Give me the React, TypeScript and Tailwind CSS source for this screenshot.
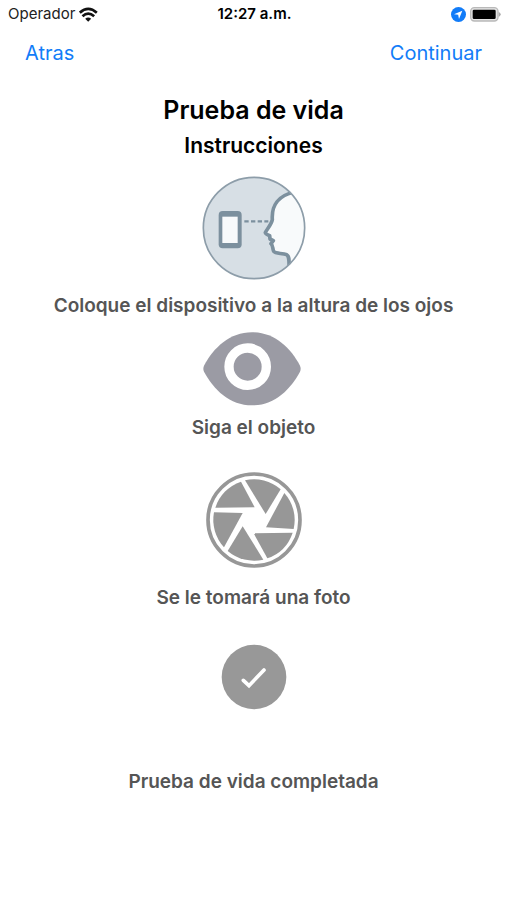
import type { ReactNode } from "react";

function WifiIcon() {
  return (
    <svg viewBox="240 15 56 45" className="h-[15px] w-[19px]" aria-hidden="true">
      <g fill="none" stroke="#111" strokeWidth="8">
        <path d="M242 32 Q267 9 293 32" />
        <path d="M250 43 Q267 27 285 43" />
      </g>
      <path d="M258 50 Q267 43 276 50 L267 59 Z" fill="#111" />
    </svg>
  );
}

function LocationIcon() {
  return (
    <svg viewBox="0 0 45 45" className="size-[15px]" aria-hidden="true">
      <circle cx="22.5" cy="22.5" r="22.5" fill="#127cf8" />
      <path d="M34 11 L9 22 L21.500 23.500 L24 36 Z" fill="#fff" />
    </svg>
  );
}

function BatteryIcon() {
  return (
    <svg viewBox="0 0 93 45" className="h-[15px] w-[31px]" aria-hidden="true">
      <rect x="2" y="2" width="82" height="40" rx="11" fill="#e4e4e4" stroke="#b9b9b9" strokeWidth="4" />
      <rect x="8" y="8" width="69" height="28" rx="4" fill="#000" />
      <path d="M86 15 Q92 18 92 22 Q92 27 86 30 Z" fill="#aaa" />
    </svg>
  );
}

function FaceIcon() {
  return (
    <svg viewBox="25 17 312 312" className="size-[104px]" aria-hidden="true">
      <defs>
        <clipPath id="face-clip">
          <circle cx="181" cy="173" r="152" />
        </clipPath>
      </defs>
      <circle cx="181" cy="173" r="152" fill="#d7dfe5" />
      <g clipPath="url(#face-clip)">
        <path
          d="M300 66 C255 76 233 105 236 148 C233 164 218 178 215 187 C217 194 224 193 228 196 L229 206 L239 211 L232 220 C239 226 236 234 240 243 C246 252 266 247 279 253 C288 259 286 270 286 295 L345 295 L345 60 Z"
          fill="#f8fafb"
        />
        <path
          d="M300 66 C255 76 233 105 236 148 C233 164 218 178 215 187 C217 194 224 193 228 196 L229 206 L239 211 L232 220 C239 226 236 234 240 243 C246 252 266 247 279 253 C288 259 286 270 286 295"
          fill="none"
          stroke="#7c909e"
          strokeWidth="11"
          strokeLinejoin="round"
        />
      </g>
      <circle cx="181" cy="173" r="152" fill="none" stroke="#8d9da9" strokeWidth="5" />
      <rect x="75" y="122" width="69" height="112" rx="12" fill="#7c909e" />
      <rect x="86" y="139" width="46" height="79" fill="#f8fafb" />
      <path d="M152 153 H224" stroke="#7c909e" strokeWidth="7" strokeDasharray="13 7" />
    </svg>
  );
}

function EyeIcon() {
  return (
    <svg viewBox="30 20 306 222" className="h-[74px] w-[102px]" aria-hidden="true">
      <path
        d="M33 121 C62 67 110 21 177 21 C244 21 292 67 321 121 Q325 130 321 139 C292 193 244 240 177 240 C110 240 62 193 33 139 Q29 130 33 121 Z"
        fill="#9b9ba4"
      />
      <circle cx="164" cy="124" r="56" fill="none" stroke="#fff" strokeWidth="28" />
    </svg>
  );
}

function ApertureIcon() {
  return (
    <svg viewBox="30 26 288 288" className="size-[96px]" aria-hidden="true">
      <circle cx="174" cy="170" r="138" fill="#fff" stroke="#979797" strokeWidth="11" />
      <g fill="#979797">
        <path d="M58 133 A122 122 0 0 1 135 55 L176 132 Z" />
        <path d="M147 51 A122 122 0 0 1 254 78 L209 152 Z" />
        <path d="M265 89 A122 122 0 0 1 293 197 L210 192 Z" />
        <path d="M290 208 A122 122 0 0 1 214 285 L173 210 Z" />
        <path d="M202 289 A122 122 0 0 1 95 263 L140 189 Z" />
        <path d="M84 252 A122 122 0 0 1 54 147 L140 149 Z" />
      </g>
    </svg>
  );
}

function CheckIcon() {
  return (
    <svg viewBox="33 26 198 198" className="size-[66px]" aria-hidden="true">
      <circle cx="132" cy="125" r="97" fill="#989898" />
      <path d="M100 135 L117 151 L162 104" fill="none" stroke="#fff" strokeWidth="11" strokeLinecap="round" />
    </svg>
  );
}

function Step({ icon, label, className }: { icon: ReactNode; label: string; className: string }) {
  return (
    <li className={`flex flex-col items-center ${className}`}>
      {icon}
      <p className="text-center text-[19px] leading-6 font-semibold text-[#555]">{label}</p>
    </li>
  );
}

export default function App() {
  return (
    <div className="min-h-screen bg-white font-['Inter','Liberation_Sans',sans-serif] text-black">
      <header>
        <div className="grid h-7 grid-cols-3 items-center pr-1.5 pl-2 text-[15px] text-[#222]">
          <div className="flex items-center gap-1">
            <span>Operador</span>
            <WifiIcon />
          </div>
          <time className="text-center font-semibold whitespace-nowrap text-black">12:27 a.m.</time>
          <div className="flex items-center justify-end gap-1">
            <LocationIcon />
            <BatteryIcon />
          </div>
        </div>
        <nav className="flex h-[50px] items-center justify-between px-[25px] text-xl text-[#127cf8]">
          <button type="button">Atras</button>
          <button type="button">Continuar</button>
        </nav>
      </header>

      <main className="px-4 pt-4 pb-8">
        <h1 className="text-center text-[25px] leading-8 font-semibold">Prueba de vida</h1>
        <h2 className="mt-1.5 text-center text-[21px] leading-7 font-semibold">Instrucciones</h2>

        <ol className="mt-4">
          <Step className="gap-3.5" icon={<FaceIcon />} label="Coloque el dispositivo a la altura de los ojos" />
          <Step className="mt-3.5 gap-2.5" icon={<EyeIcon />} label="Siga el objeto" />
          <Step className="mt-8 gap-[18px]" icon={<ApertureIcon />} label="Se le tomará una foto" />
          <Step className="mt-[34px] gap-[60px]" icon={<CheckIcon />} label="Prueba de vida completada" />
        </ol>
      </main>
    </div>
  );
}
